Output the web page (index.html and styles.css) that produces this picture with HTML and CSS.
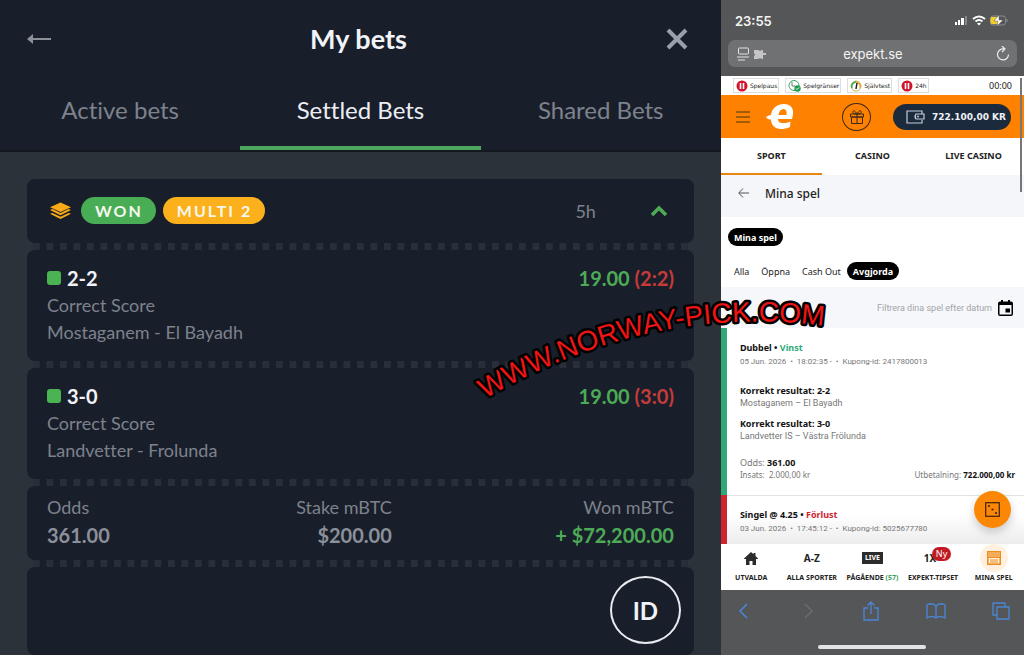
FILE: index.html
```html
<!DOCTYPE html>
<html lang="sv">
<head>
<meta charset="utf-8">
<meta name="viewport" content="width=device-width, initial-scale=1">
<title>My bets</title>
<link rel="stylesheet" href="styles.css">
</head>
<body>
<div class="page">
  <main class="bets" lang="en">
    <header class="bets-head">
      <div class="title-row">
        <button class="icon-btn" aria-label="Back">
          <svg width="24" height="12" viewBox="0 0 24 12"><path d="M5 5h19v2H5z" fill="#8b9099"/><path d="M0 6 6 1v10z" fill="#8b9099"/></svg>
        </button>
        <h1 class="bets-title">My bets</h1>
        <button class="icon-btn" aria-label="Close">
          <svg width="22" height="22" viewBox="0 0 22 22"><path d="M2 2l18 18M20 2 2 20" stroke="#98a1ab" stroke-width="4"/></svg>
        </button>
      </div>
      <nav class="bet-tabs">
        <button class="bet-tab">Active bets</button>
        <button class="bet-tab is-active">Settled Bets</button>
        <button class="bet-tab">Shared Bets</button>
      </nav>
    </header>
    <article class="slip">
      <section class="part slip-head">
        <svg class="layers" width="21" height="18" viewBox="0 0 22 18"><path d="M11 0 22 5 11 10 0 5z" fill="#fbaa17"/><path d="M0 8 2.500 7l8.500 4 8.500-4L22 8l-11 5.500zM0 12l2.500-1 8.500 4 8.500-4 2.500 1-11 5.500z" fill="#fbaa17"/></svg>
        <span class="badge badge-won">WON</span>
        <span class="badge badge-multi">MULTI 2</span>
        <span class="age">5h</span>
        <button class="icon-btn" aria-label="Collapse">
          <svg width="18" height="12" viewBox="0 0 18 12"><path d="M2 10l7-7 7 7" fill="none" stroke="#4dab57" stroke-width="3.500"/></svg>
        </button>
      </section>
      <div class="perforation"></div>
      <section class="part leg">
        <div class="leg-top"><span class="mark"></span><h2 class="pick">2-2</h2><span class="price">19.00 <span class="score">(2:2)</span></span></div>
        <p class="muted">Correct Score</p>
        <p class="muted">Mostaganem - El Bayadh</p>
      </section>
      <div class="perforation"></div>
      <section class="part leg">
        <div class="leg-top"><span class="mark"></span><h2 class="pick">3-0</h2><span class="price">19.00 <span class="score">(3:0)</span></span></div>
        <p class="muted">Correct Score</p>
        <p class="muted">Landvetter - Frolunda</p>
      </section>
      <div class="perforation"></div>
      <dl class="part totals">
        <div><dt>Odds</dt><dd>361.00</dd></div>
        <div class="right"><dt>Stake mBTC</dt><dd>$200.00</dd></div>
        <div class="right"><dt>Won mBTC</dt><dd class="win">+ $72,200.00</dd></div>
      </dl>
      <div class="perforation"></div>
      <section class="part slip-foot"><button class="id-btn">ID</button></section>
    </article>
  </main>

  <aside class="phone">
    <header class="browser-top">
      <div class="status">
        <span>23:55</span>
        <svg width="54" height="12" viewBox="0 0 54 12">
          <g fill="#fff"><rect x="0" y="7" width="2" height="3"/><rect x="3" y="5" width="2" height="5"/><rect x="6" y="3" width="3" height="7"/></g><rect x="10" y="1" width="2" height="9" fill="#888"/>
          <g fill="none" stroke="#fff" stroke-width="2"><path d="M18 4q6-5 12 0M20.500 6.500q3.500-3 7 0"/></g><path d="M22 8.500q2-1.500 4 0l-2 2z" fill="#fff"/>
          <rect x="35.500" y="1" width="15" height="9" rx="2.500" fill="none" stroke="#8c8c8c"/><path d="M37 2h6v7h-6q-1.500 0-1.500-2V4q0-2 1.500-2z" fill="#f2ce2d"/><path d="M52 4v3" stroke="#8c8c8c"/><path d="M44 0l-5 6h4l-1 5 6-6h-4z" fill="#fff" stroke="#555657" stroke-width=".5"/>
        </svg>
      </div>
      <div class="address">
        <svg width="29" height="14" viewBox="0 0 29 14"><rect x="1.500" y="1" width="10" height="6" rx="1" fill="none" stroke="#e4e4e4"/><path d="M0 10h12M1 13h7" stroke="#e4e4e4"/><path d="M17 3h4q2 1.500 4 0h1v3h3v2h-3v4h-1q-2-1.500-4 0h-4V9q2-1 0-3z" fill="#c5c5c5"/></svg>
        <input class="url" type="text" value="expekt.se" aria-label="Address" readonly>
        <button class="icon-btn" aria-label="Reload"><svg width="14" height="15" viewBox="0 0 14 15"><path d="M12.500 8.500A5.500 5.500 0 1 1 8 3M6 0l3 3-3 3" fill="none" stroke="#eee" stroke-width="1.200"/></svg></button>
      </div>
    </header>

    <div class="site">
      <div class="safety">
        <a class="tool" href="#"><svg width="12" height="12" viewBox="0 0 12 12"><circle cx="6" cy="6" r="5.500" fill="#d0142c"/><path d="M4.500 3v6M7.500 3v6" stroke="#fff" stroke-width="1.600"/></svg>Spelpaus</a>
        <a class="tool" href="#"><svg width="13" height="12" viewBox="0 0 13 12"><circle cx="6" cy="5.500" r="5" fill="#fff" stroke="#35a567"/><path d="M4 2v4h3" fill="none" stroke="#777"/><circle cx="9.500" cy="8.500" r="3.200" fill="#1c9b50"/><path d="M8 8.500l1 1 2-2" fill="none" stroke="#fff"/></svg>Spelgränser</a>
        <a class="tool" href="#"><svg width="12" height="12" viewBox="0 0 12 12"><circle cx="6" cy="6" r="5" fill="#fff" stroke="#b9bd55"/><path d="M2 8a4.500 4.500 0 0 1 4-6" fill="none" stroke="#3ba35a" stroke-width="1.500"/><path d="M6 2a4.500 4.500 0 0 1 4 6" fill="none" stroke="#e3a62e" stroke-width="1.500"/><path d="M6 9l1-6" stroke="#222" stroke-width="1.500"/></svg>Självtest</a>
        <a class="tool" href="#"><svg width="12" height="12" viewBox="0 0 12 12"><circle cx="6" cy="6" r="5.500" fill="#d0142c"/><path d="M4.500 3v6M7.500 3v6" stroke="#fff" stroke-width="1.600"/></svg>24h</a>
        <time class="timer">00:00</time>
      </div>
      <div class="brand">
        <button class="icon-btn" aria-label="Menu"><svg width="14" height="12" viewBox="0 0 14 12"><path d="M0 1h14M0 6h14M0 11h14" stroke="#4a3216"/></svg></button>
        <svg class="logo" width="28" height="25" viewBox="0 0 28 25" role="img" aria-label="Expekt"><path d="M0 13q3-2 5-2C6 4 11 0 18 0c6 0 10 4 9 10-.2 2-.6 3.500-1 5H12c0 3 2 4 5 4 3 0 5-.5 7.500-1.500L24 23c-3 1.500-6 2-9 2-6 0-10-4-10-9.500-2 0-4-.5-5-2.500z" fill="#fff"/><path d="M12.500 11h8c.5-4-.5-6-3-6s-4.500 2-5 6z" fill="#ff8100"/></svg>
        <button class="gift" aria-label="Bonus"><svg width="14" height="14" viewBox="0 0 14 14"><path d="M.5 4h13v3H.5zM1.500 7h11v6.500h-11zM7 4v9.500M7 4Q4-1 3 1.500T7 4q3-5 4-2.500T7 4" fill="none" stroke="#3a2a1a"/></svg></button>
        <button class="balance"><svg width="19" height="14" viewBox="0 0 19 14"><path d="M16 4V1H1v12h15v-3M10 4h8v5h-8q-2-2.500 0-5z" fill="none" stroke="#c6ced9" stroke-width="1.200"/><circle cx="12" cy="6.500" r="1" fill="#c6ced9"/></svg>722.100,00 KR</button>
      </div>
      <nav class="site-tabs">
        <a class="site-tab is-active" href="#">SPORT</a>
        <a class="site-tab" href="#">CASINO</a>
        <a class="site-tab" href="#">LIVE CASINO</a>
      </nav>
      <div class="crumb">
        <button class="icon-btn" aria-label="Tillbaka"><svg width="11" height="10" viewBox="0 0 11 10"><path d="M11 5H1M5 .500.700 5 5 9.500" fill="none" stroke="#555"/></svg></button>
        <h2 class="crumb-title">Mina spel</h2>
      </div>
      <div class="filters">
        <button class="pill">Mina spel</button>
        <div class="filter-row">
          <button class="plain">Alla</button>
          <button class="plain">Öppna</button>
          <button class="plain">Cash Out</button>
          <button class="pill">Avgjorda</button>
        </div>
      </div>
      <button class="date-filter">Filtrera dina spel efter datum
        <svg width="15" height="16" viewBox="0 0 15 16"><path d="M2 1.500h1V0h2v1.500h5V0h2v1.500h1q2 0 2 2V14q0 2-2 2H2q-2 0-2-2V3.500q0-2 2-2z" fill="#000"/><path d="M1.500 5h12v9.500h-12z" fill="#f6f7fb"/><path d="M7.500 8.500H12v4H7.500z" fill="#000"/></svg>
      </button>
      <section class="coupon coupon-win">
        <h3 class="strong">Dubbel • <span class="vinst">Vinst</span></h3>
        <p class="meta">05 Jun. 2026 &nbsp;•&nbsp; 18:02:35 - &nbsp;•&nbsp; Kupong-id: 2417800013</p>
        <div class="match"><h4 class="strong">Korrekt resultat: 2-2</h4><p>Mostaganem – El Bayadh</p></div>
        <div class="match"><h4 class="strong">Korrekt resultat: 3-0</h4><p>Landvetter IS – Västra Frölunda</p></div>
        <p class="odds">Odds: <b>361.00</b></p>
        <div class="payout"><span class="stake">Insats: &nbsp;2.000,00 kr</span><span class="stake">Utbetalning: <b>722.000,00 kr</b></span></div>
      </section>
      <section class="coupon coupon-loss">
        <h3 class="strong">Singel @ 4.25 • <span class="forlust">Förlust</span></h3>
        <p class="meta">03 Jun. 2026 &nbsp;•&nbsp; 17:45:12 - &nbsp;•&nbsp; Kupong-id: 5025677780</p>
        <button class="fab" aria-label="Tärning"><svg width="15" height="15" viewBox="0 0 15 15"><rect x=".7" y=".7" width="13.600" height="13.600" fill="none" stroke="#3d2409" stroke-width="1.200"/><g fill="#3d2409"><circle cx="4" cy="4" r="1.100"/><circle cx="7.500" cy="7.500" r="1.100"/><circle cx="11" cy="11" r="1.100"/></g></svg></button>
      </section>
      <div class="scroll-thumb"></div>
    </div>

    <nav class="dock">
      <a class="dock-item" href="#"><span class="dock-icon"><svg width="14" height="13" viewBox="0 0 14 13"><path d="M7 0l2.500 2.200V1h2v3L14 6.500V7h-2v6H8.500V9h-3v4H2V7H0v-.5z" fill="#2c2c2c"/></svg></span>UTVALDA</a>
      <a class="dock-item" href="#"><span class="dock-icon az">A-Z</span>ALLA SPORTER</a>
      <a class="dock-item" href="#"><span class="dock-icon"><span class="live">LIVE</span></span><span>PÅGÅENDE <span class="count">(57)</span></span></a>
      <a class="dock-item" href="#"><span class="dock-icon az tip">1X<span class="new">Ny</span></span>EXPEKT-TIPSET</a>
      <a class="dock-item" href="#"><span class="dock-icon halo"><svg width="14" height="14" viewBox="0 0 14 14"><rect x=".8" y=".8" width="12.400" height="12.400" fill="#fff3e2" stroke="#f08c1b" stroke-width="1.600"/><path d="M1 1h12v5H1z" fill="#f6ac58"/><path d="M1 6.500h12M3 9h8M3 11h8" stroke="#f08c1b"/></svg></span>MINA SPEL</a>
    </nav>
    <footer class="browser-bottom">
      <div class="browser-tools">
        <button class="icon-btn" aria-label="Previous page"><svg width="18" height="20" viewBox="0 0 18 20"><path d="M12 3 5 10l7 7" fill="none" stroke="#4b87d8" stroke-width="1.500"/></svg></button>
        <button class="icon-btn" aria-label="Next page"><svg width="18" height="20" viewBox="0 0 18 20"><path d="M6 3l7 7-7 7" fill="none" stroke="#6b6c6e" stroke-width="1.500"/></svg></button>
        <button class="icon-btn" aria-label="Share"><svg width="18" height="20" viewBox="0 0 18 20"><path d="M6 7H2v12h14V7h-4M9 13V1M5.500 4.500 9 1l3.500 3.500" fill="none" stroke="#4b87d8" stroke-width="1.300"/></svg></button>
        <button class="icon-btn" aria-label="Bookmarks"><svg width="20" height="20" viewBox="0 0 20 20"><path d="M10 5Q6 1 1 4v13q5-3 9 0 4-3 9 0V4q-5-3-9 1v12" fill="none" stroke="#4b87d8" stroke-width="1.300"/></svg></button>
        <button class="icon-btn" aria-label="Tabs"><svg width="18" height="20" viewBox="0 0 18 20"><path d="M5 14H1V2h12v4M5 6h12v12H5z" fill="none" stroke="#4b87d8" stroke-width="1.300" stroke-linejoin="round"/></svg></button>
      </div>
      <div class="home-bar"></div>
    </footer>
  </aside>

  <svg class="watermark" viewBox="0 0 1024 655">
    <path id="arc" d="M485 399Q654 299 840 328" fill="none"/>
    <text class="watermark-text"><textPath href="#arc">WWW.NORWAY-PICK.COM</textPath></text>
  </svg>
</div>
</body>
</html>
```
FILE: styles.css
```css
* { box-sizing: border-box; }
body { margin: 0; background: #2c323a; }
h1, h2, h3, h4, p, dl, dd { margin: 0; }
button, input { font: inherit; color: inherit; background: none; border: 0; padding: 0; }
a { color: inherit; text-decoration: none; }
svg { display: block; flex: none; }

.page { position: relative; display: grid; grid-template-columns: 70.4% minmax(0, 1fr); min-height: 100vh; }
.icon-btn { display: flex; align-items: center; justify-content: center; flex: none; }

/* Bet slip */
.bets { display: flex; flex-direction: column; font-family: Lato, sans-serif; background: #2c323a; color: #f1f3f8; }
.bets, .bets button { font-variant-ligatures: none; }
.bets-head { background: #191f2a; border-bottom: 2px solid #14181f; }
.title-row { display: flex; align-items: center; justify-content: space-between; padding: 19px 33px 17px 27px; }
.bets-title { font-size: 27px; line-height: 40px; font-weight: 700; }
.bet-tabs { display: grid; grid-template-columns: repeat(3, 1fr); }
.bet-tab { padding: 18px 0 20px; border-bottom: 4px solid transparent; font-size: 24px; line-height: 32px; color: #7d828d; }
.bet-tab.is-active { color: #eceef5; border-color: #4aa75b; }

.slip { flex: 1; display: flex; flex-direction: column; padding: 27px 27px 0; }
.part { background: #191f2a; border-radius: 8px; padding: 14px 20px 15px; }
.perforation { height: 7px; margin: 0 6px; background: linear-gradient(90deg, #292f38 50%, #191f2a 50%) 0 0 / calc(200% / 97) 100%; }
.slip-head { display: flex; align-items: center; min-height: 64px; }
.layers { margin: 0 10px 0 3px; }
.badge { border-radius: 14px; line-height: 27px; padding: 0 13px 0 14px; font-size: 16px; font-weight: 700; letter-spacing: 2px; color: #f5f7ef; }
.badge-won { background: #49ad55; margin-right: 7px; }
.badge-multi { background: #fcb01c; }
.age { margin-left: auto; padding-right: 54px; font-size: 18px; color: #7d828d; }
.slip-head .icon-btn { margin-right: 6px; }
.leg-top { display: flex; align-items: center; line-height: 28px; }
.mark { width: 14px; height: 14px; margin-right: 6px; border-radius: 3px; background: #49b451; }
.pick { font-size: 20px; font-weight: 700; }
.price { margin-left: auto; font-size: 20px; font-weight: 700; color: #4dab57; }
.score { color: #c43b3a; }
.muted { font-size: 18px; line-height: 27px; color: #7d828d; }
.totals { display: grid; grid-template-columns: 26% 29% 45%; padding: 7px 20px 11px; }
.totals .right { text-align: right; }
.totals dt { font-size: 18px; line-height: 28px; color: #7d828d; }
.totals dd { font-size: 20px; line-height: 28px; font-weight: 700; color: #8b909a; white-space: nowrap; }
.totals .win { color: #4dab57; }
.slip-foot { flex: 1; display: flex; justify-content: flex-end; align-items: flex-start; padding: 9px 13px; }
.id-btn { width: 71px; height: 68px; border: 2px solid #e8ebf0; border-radius: 50%; font-size: 24px; font-weight: 700; }

/* Phone */
.phone { display: flex; flex-direction: column; min-width: 0; font-family: "Noto Sans", sans-serif; background: #fff; color: #222; }
.browser-top { background: #555657; color: #f4f4f4; padding: 10px 7px 9px; font-family: Inter, sans-serif; }
.status { display: flex; align-items: center; justify-content: space-between; padding: 0 8px 8px 7px; font-size: 13px; line-height: 22px; font-weight: 600; }
.address { display: flex; align-items: center; height: 27px; padding: 0 7px 0 9px; border-radius: 7px; background: #707173; }
.url { flex: 1; min-width: 0; padding-right: 16px; text-align: center; font-size: 13px; }

.site { position: relative; flex: 1; display: flex; flex-direction: column; }
.safety { display: flex; align-items: center; height: 19px; padding: 0 12px; gap: 6px; font-family: "DejaVu Sans", sans-serif; font-size: 6px; }
.tool { display: flex; align-items: center; gap: 2px; height: 15px; padding: 0 1px 0 2px; border: 1px solid #ddd; white-space: nowrap; }
.timer { margin-left: auto; font-family: "Noto Sans", sans-serif; font-size: 9px; }
.brand { display: flex; align-items: center; height: 43px; padding: 0 13px 0 15px; background: #ff8100; }
.logo { margin-left: 16px; }
.gift { display: flex; align-items: center; justify-content: center; width: 29px; height: 28px; margin: 0 22px 0 auto; border: 1px solid #3a2a1a; border-radius: 50%; }
.balance { display: flex; align-items: center; justify-content: flex-end; gap: 7px; width: 118px; height: 26px; padding-right: 5px; border-radius: 13px; background: #1b2a3d; color: #eef1f5; font-family: "DejaVu Sans", sans-serif; font-size: 9px; font-weight: 700; white-space: nowrap; }
.site-tabs { display: grid; grid-template-columns: repeat(3, 1fr); font-size: 9px; font-weight: 700; text-align: center; }
.site-tab { line-height: 35px; border-bottom: 2px solid transparent; }
.site-tab.is-active { border-color: #e8860f; }
.crumb { display: flex; align-items: center; gap: 16px; height: 42px; padding: 0 17px 6px; background: #f5f6fa; }
.crumb-title { font-size: 12px; font-weight: 500; }
.filters { height: 70px; padding: 11px 7px 0; font-size: 9px; }
.pill { height: 18px; padding: 0 6px; border-radius: 9px; background: #000; color: #fff; font-weight: 700; }
.filter-row { display: flex; align-items: center; gap: 6px; padding-top: 16px; }
.plain { padding: 0 0 0 6px; }
.date-filter { display: flex; align-items: center; justify-content: flex-end; gap: 6px; height: 41px; padding: 0 11px; background: #f6f7fb; font-family: Roboto, sans-serif; font-size: 9px; color: #a3a4a8; }
.coupon { position: relative; border-left: 6px solid; padding: 13px 9px 0 13px; font-size: 9px; line-height: 12px; color: #777; }
.coupon-win { border-color: #2fa878; padding-bottom: 14px; }
.coupon-loss { flex: 1; border-color: #cf2430; background: linear-gradient(#fff 40%, #ececec); box-shadow: inset 0 1px #e4e4e4; }
.strong { font-size: 9px; line-height: 14px; font-weight: 700; color: #111; }
.coupon b { color: #111; }
.vinst { color: #2fa878; }
.forlust { color: #cf2430; }
.meta { font-family: Roboto, sans-serif; font-size: 8px; line-height: 14px; white-space: nowrap; }
.match { padding-top: 9px; line-height: 10px; }
.match p { font-family: Roboto, sans-serif; font-size: 9px; }
.meta + .match { padding-top: 15px; }
.odds { padding-top: 16px; }
.payout { display: flex; justify-content: space-between; }
.stake { font-size: 8px; }
.fab { position: absolute; right: 13px; top: -4px; display: flex; align-items: center; justify-content: center; width: 37px; height: 37px; border-radius: 50%; background: #fb8705; box-shadow: 0 4px 10px #0003; }
.scroll-thumb { position: absolute; right: 2px; top: 2px; width: 2px; height: 114px; background: #77777a; }

.dock { display: grid; grid-template-columns: repeat(5, 1fr); height: 46px; background: #fff; font-size: 7px; font-weight: 700; }
.dock-item { display: flex; flex-direction: column; align-items: center; line-height: 12px; white-space: nowrap; }
.dock-icon { display: flex; align-items: center; justify-content: center; height: 28px; }
.az { font-size: 10px; }
.live { padding: 0 3px; background: #2c2c2c; color: #fff; font-size: 7px; }
.tip { position: relative; padding-right: 6px; }
.new { position: absolute; right: -9px; top: 3px; padding: 0 4px; border-radius: 8px; background: #c11a22; color: #fff; font-size: 9px; line-height: 14px; font-weight: 400; }
.halo { width: 28px; border-radius: 50%; background: #fff0df; }
.count { color: #3aa25a; }
.browser-bottom { height: 65px; padding: 11px 14px 6px; display: flex; flex-direction: column; justify-content: space-between; background: #555657; }
.browser-tools { display: flex; justify-content: space-between; }
.home-bar { width: 108px; height: 4px; margin: 0 auto; border-radius: 2px; background: #e4e4e4; }

.watermark { position: absolute; inset: 0; width: 100%; height: 100%; pointer-events: none; }
.watermark-text { font-family: "Liberation Sans", Arial, sans-serif; font-size: 28px; fill: #f01414; stroke: #000; stroke-width: 5px; stroke-linejoin: round; paint-order: stroke; }
```
